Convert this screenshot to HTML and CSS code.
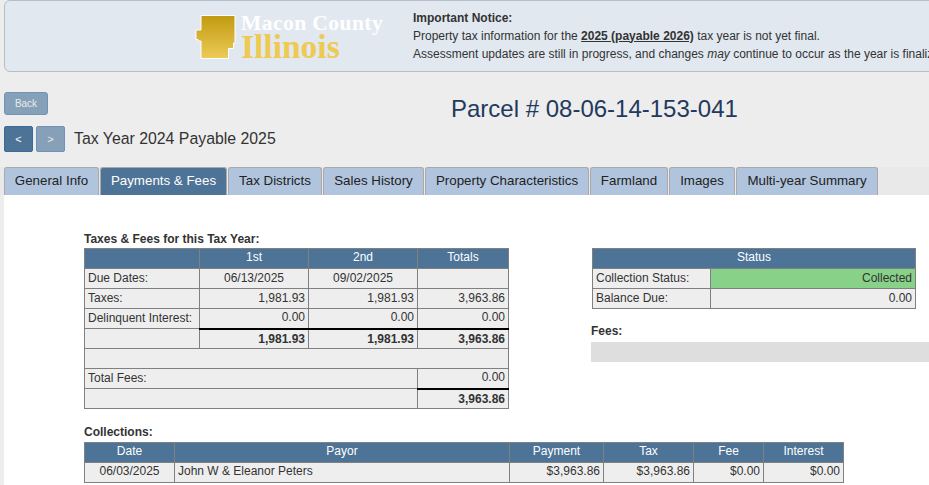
FILE: index.html
```html
<!DOCTYPE html>
<html lang="en">
<head>
<meta charset="utf-8">
<title>Parcel 08-06-14-153-041</title>
<link rel="stylesheet" href="styles.css">
</head>
<body>
<header class="banner">
  <div class="logo">
    <svg class="logo-map" width="42" height="46" viewBox="0 0 42 46">
      <defs><linearGradient id="gold" x1="0" y1="0" x2="0" y2="1"><stop offset="0" stop-color="#c19a10"/><stop offset="1" stop-color="#edcb58"/></linearGradient></defs>
      <polygon points="7,1.500 41,1.500 41,29 39.500,29 39.500,34.500 34.500,34.500 34.500,44.500 7,44.500 7,27 4,27 4,25.500 2,25.500 2,16 7,16" fill="url(#gold)" stroke="#fff" stroke-width="1"/>
    </svg>
    <div class="logo-text">
      <div class="logo-county">Macon County</div>
      <div class="logo-state">Illinois</div>
    </div>
  </div>
  <div class="notice">
    <strong>Important Notice:</strong><br>
    Property tax information for the <strong class="u">2025 (payable 2026)</strong> tax year is not yet final.<br>
    Assessment updates are still in progress, and changes <em>may</em> continue to occur as the year is finalized.
  </div>
</header>

<section class="title-row">
  <div class="title-left">
    <button class="btn btn-light btn-back">Back</button>
    <div class="year-row">
      <button class="btn btn-dark btn-nav">&lt;</button>
      <button class="btn btn-light btn-nav">&gt;</button>
      <span class="year">Tax Year 2024 Payable 2025</span>
    </div>
  </div>
  <h1 class="parcel">Parcel # 08-06-14-153-041</h1>
</section>

<nav class="tabs">
  <a class="tab t1">General Info</a>
  <a class="tab t2 active">Payments &amp; Fees</a>
  <a class="tab t3">Tax Districts</a>
  <a class="tab t4">Sales History</a>
  <a class="tab t5">Property Characteristics</a>
  <a class="tab t6">Farmland</a>
  <a class="tab t7">Images</a>
  <a class="tab t8">Multi-year Summary</a>
</nav>

<main class="panel">
  <div class="top-grid">
    <div class="left">
      <div class="label">Taxes &amp; Fees for this Tax Year:</div>
      <table class="grid taxes">
        <colgroup><col class="c115"><col class="c109"><col class="c109"><col class="c91"></colgroup>
        <tr><th></th><th>1st</th><th>2nd</th><th>Totals</th></tr>
        <tr><td>Due Dates:</td><td class="c">06/13/2025</td><td class="c">09/02/2025</td><td></td></tr>
        <tr><td>Taxes:</td><td class="r">1,981.93</td><td class="r">1,981.93</td><td class="r">3,963.86</td></tr>
        <tr><td>Delinquent Interest:</td><td class="r">0.00</td><td class="r">0.00</td><td class="r">0.00</td></tr>
        <tr><td></td><td class="r b sum">1,981.93</td><td class="r b sum">1,981.93</td><td class="r b sum">3,963.86</td></tr>
        <tr><td colspan="4"></td></tr>
        <tr><td colspan="3">Total Fees:</td><td class="r">0.00</td></tr>
        <tr><td colspan="3"></td><td class="r b sum">3,963.86</td></tr>
      </table>
    </div>
    <div class="right">
      <table class="grid status">
        <colgroup><col class="c118"><col class="c205"></colgroup>
        <tr><th colspan="2">Status</th></tr>
        <tr><td>Collection Status:</td><td class="r ok">Collected</td></tr>
        <tr><td>Balance Due:</td><td class="r">0.00</td></tr>
      </table>
      <div class="label fees-label">Fees:</div>
      <div class="fees-bar"></div>
    </div>
  </div>
  <div class="label coll-label">Collections:</div>
  <table class="grid coll">
    <colgroup><col class="c90"><col class="c335"><col class="c94"><col class="c90b"><col class="c70"><col class="c81"></colgroup>
    <tr><th>Date</th><th>Payor</th><th>Payment</th><th>Tax</th><th>Fee</th><th>Interest</th></tr>
    <tr><td class="c">06/03/2025</td><td>John W &amp; Eleanor Peters</td><td class="r">$3,963.86</td><td class="r">$3,963.86</td><td class="r">$0.00</td><td class="r">$0.00</td></tr>
  </table>
</main>
</body>
</html>
```

FILE: styles.css
```css
* { box-sizing: border-box; }
html, body { margin: 0; height: 485px; overflow: hidden; }
body { width: 929px; background: #ededed; color: #333; font: 12px/20px "Liberation Sans", Arial, sans-serif; }

.banner { width: 1200px; height: 72px; margin-left: 4px; padding-left: 189px; display: flex; align-items: center; background: #e1e8f0; border: 1px solid #b4bec8; border-radius: 6px; }
.logo { width: 219px; flex: none; display: flex; align-items: center; gap: 5px; margin-top: -1px; }
.logo-map { display: block; margin-top: 2px; }
.logo-text { font-family: "Liberation Serif", serif; font-weight: bold; }
.logo-county { color: #fff; font-size: 21.500px; line-height: 22px; letter-spacing: .45px; }
.logo-state { color: #eeca53; font-size: 33.500px; line-height: 26px; }
.notice { color: #333; font-size: 12px; line-height: 18px; margin-top: -1px; }
.u { text-decoration: underline; }

.title-row { height: 95px; padding: 20px 0 0 4px; display: flex; }
.title-left { width: 447px; flex: none; }
.btn { display: block; border: 1px solid #6f93b8; color: #fff; font: 10px "Liberation Sans", Arial, sans-serif; border-radius: 3px; padding: 0; }
.btn-light { background: #86a0b8; color: #e6ebf0; }
.btn-dark { background: #4d7396; border-color: #3c6a96; }
.btn-back { width: 44px; height: 23px; }
.year-row { display: flex; align-items: center; margin-top: 11px; }
.btn-nav { width: 29px; height: 26px; margin-right: 3px; border-radius: 2px; font-size: 11px; }
.year { font-size: 15.850px; margin-left: 6px; }
.parcel { margin: 3px 0 0; color: #23395d; font-size: 24px; font-weight: normal; line-height: 28px; }

.tabs { display: flex; gap: 1px; height: 28px; padding-left: 4px; background: #e9e9e9; }
.tab { height: 28px; flex: none; border: 1px solid #a9a9a9; border-bottom: none; border-radius: 3px 3px 0 0; background: #b0c4de; color: #222; font-size: 13.330px; line-height: 25px; text-align: center; }
.t1 { width: 95px; } .t2 { width: 127px; } .t3 { width: 94px; } .t4 { width: 101px; }
.t5 { width: 164px; } .t6 { width: 78px; } .t7 { width: 66px; } .t8 { width: 142px; }
.tab.active { background: #4d7396; color: #fff; }

.panel { margin-left: 4px; height: 290px; padding: 36px 0 0 80px; background: #fff; }
.top-grid { display: flex; }
.left { width: 507px; flex: none; }
.right { width: 400px; flex: none; padding-top: 17px; }
.label { font-weight: bold; font-size: 12px; line-height: 17px; color: #333; }

.grid { border-collapse: collapse; table-layout: fixed; background: #eee; }
.grid th, .grid td { height: 20px; padding: 0 3px 2px; border: 1px solid #808080; font-size: 12px; line-height: 16px; overflow: hidden; white-space: nowrap; }
.grid th { background: #4d7396; color: #fff; font-weight: normal; text-align: center; padding-bottom: 3px; }
.taxes { width: 425px; }
.status { width: 323px; margin-left: 1px; }
.coll { width: 759px; }
.coll td { padding-bottom: 3px; }
.c115 { width: 115px; } .c109 { width: 109px; } .c91 { width: 91px; }
.c118 { width: 118px; } .c205 { width: 205px; }
.c90 { width: 90px; } .c335 { width: 335px; } .c94 { width: 94px; } .c90b { width: 90px; } .c70 { width: 70px; } .c81 { width: 80px; }
.c { text-align: center; }
.r { text-align: right; }
.b { font-weight: bold; }
.grid td.sum { border-top: 2px solid #000; padding-bottom: 0; }
.grid td.ok { background: #88d188; }
.fees-label { margin-top: 14px; }
.fees-bar { height: 20px; width: 400px; margin-top: 2px; background: #dedede; }
.coll-label { margin-top: 15px; margin-bottom: 1px; }
```
